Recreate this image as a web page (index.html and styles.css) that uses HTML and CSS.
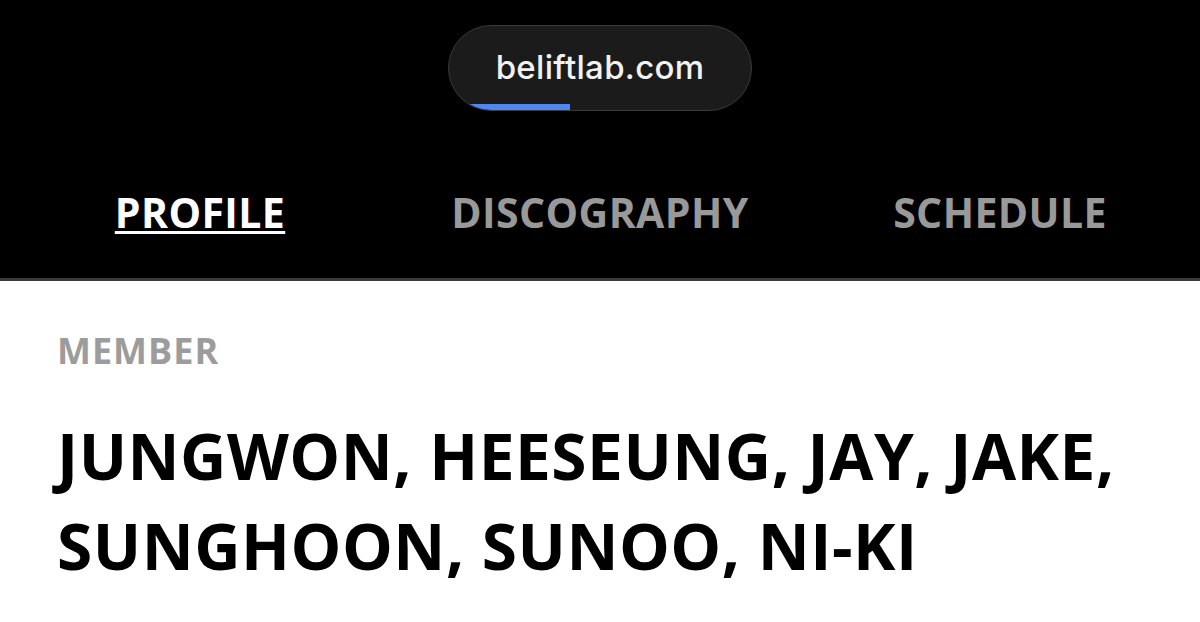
FILE: index.html
```html
<!DOCTYPE html>
<html lang="en">
<head>
    <meta charset="UTF-8">
    <meta name="viewport" content="width=device-width, initial-scale=1.0">
    <title>ENHYPEN - Profile</title>
    <link rel="stylesheet" href="styles.css">
</head>
<body>
    <header class="top">
        <!-- Address pill with page load progress -->
        <div class="address">
            <span class="address-text">beliftlab.com</span>
            <span class="progress"></span>
        </div>

        <nav class="tabs">
            <a class="tab active" href="#">PROFILE</a>
            <a class="tab" href="#">DISCOGRAPHY</a>
            <a class="tab" href="#">SCHEDULE</a>
        </nav>
    </header>

    <main class="content">
        <h3 class="label">MEMBER</h3>
        <h1 class="members">JUNGWON, HEESEUNG, JAY, JAKE, SUNGHOON, SUNOO, NI-KI</h1>
    </main>
</body>
</html>
```

FILE: styles.css
```css
/* General Styles */
body {
    margin: 0;
    background: #ffffff;
    font-family: "Open Sans", "Noto Sans", sans-serif;
}

/* Dark Header */
.top {
    background: #000000;
    border-bottom: 3px solid #3b3b3b;
    padding-top: 25px;
    height: 253px;
    box-sizing: content-box;
}

/* Address Pill */
.address {
    position: relative;
    width: 302px;
    height: 84px;
    margin: 0 auto;
    border: 1px solid #3a3a3c;
    border-radius: 43px;
    background: #1b1b1c;
    display: flex;
    justify-content: center;
    align-items: center;
    overflow: hidden;
}

.address-text {
    font-family: Inter, Roboto, sans-serif;
    font-size: 33px;
    font-weight: 500;
    color: #f2f2f2;
    letter-spacing: 0.3px;
    margin-top: -2px;
}

.progress {
    position: absolute;
    left: 0;
    bottom: 0;
    width: 121px;
    height: 6px;
    background: #4f86f0;
}

/* Tabs */
.tabs {
    display: grid;
    grid-template-columns: repeat(3, 1fr);
    margin-top: 73px;
}

.tab {
    justify-self: center;
    font-size: 41px;
    font-weight: 700;
    line-height: 56px;
    letter-spacing: 0.4px;
    color: #999999;
    text-decoration: none;
}

.tab.active {
    color: #ffffff;
    text-decoration: underline;
    text-decoration-thickness: 3px;
    text-underline-offset: 3px;
}

/* Member Section */
.content {
    padding: 0 57px;
}

.label {
    margin: 46px 0 0;
    font-size: 36px;
    font-weight: 700;
    line-height: 48px;
    letter-spacing: 1px;
    color: #9c9c9c;
}

.members {
    margin: 36px 0 0;
    font-size: 64px;
    font-weight: 700;
    line-height: 90px;
    letter-spacing: 0.5px;
    color: #000000;
}
```
